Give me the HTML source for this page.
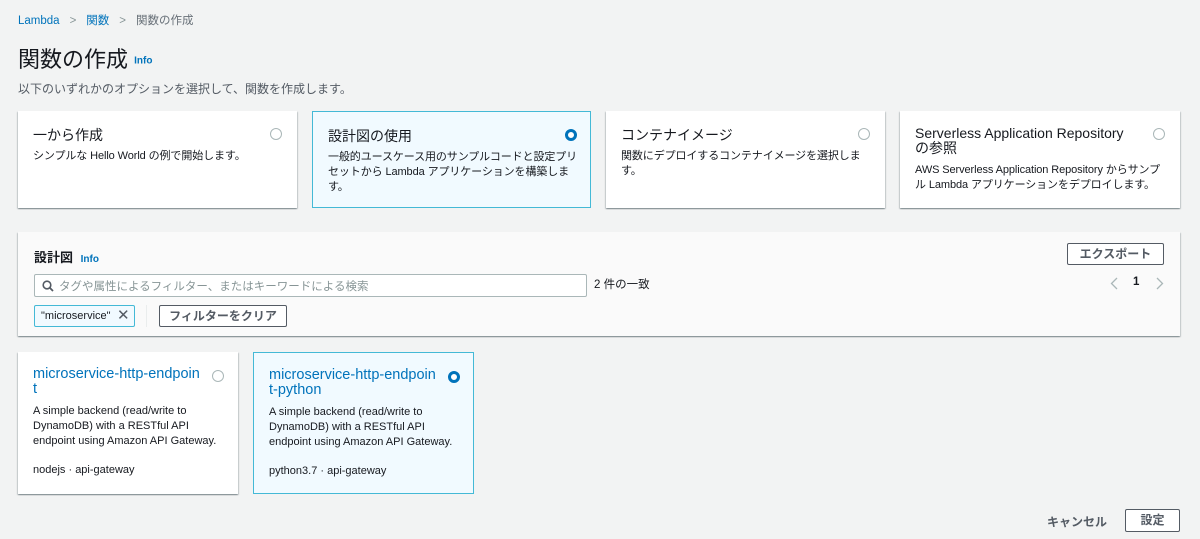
<!DOCTYPE html>
<html><head><meta charset="utf-8"><style>
*{box-sizing:border-box;margin:0;padding:0}
body{width:1200px;height:539px;background:#f2f3f3;font-family:"Liberation Sans","Noto Sans CJK JP",sans-serif;color:#16191f;position:relative;overflow:hidden;font-size:12px}
.a{position:absolute}
.blue{color:#0073bb}
.card{position:absolute;background:#fff;box-shadow:0 1px 1px rgba(0,28,36,.3),1px 1px 1px rgba(0,28,36,.15),-1px 1px 1px rgba(0,28,36,.15)}
.sel{background:#f1faff;border:1px solid #44b9d6;box-shadow:none}
.radio{position:absolute;width:12px;height:12px;border-radius:50%;border:1px solid #aab7b8;background:#fff}
.radio.on{border:3.5px solid #0073bb}
.ct{position:absolute;font-size:14px;left:15px;top:14px}
.cd{position:absolute;left:15px;top:38px;font-size:11px;line-height:15px;color:#16191f;white-space:nowrap;letter-spacing:-0.1px}
.btn{position:absolute;border:1px solid #545b64;background:#fff;font-weight:bold;font-size:12px;text-align:center;color:#545b64;border-radius:2px}
.bd{position:absolute;left:15px;top:52px;font-size:11px;line-height:15px;white-space:nowrap}
.bt{position:absolute;left:15px;top:15px;font-size:14.5px;line-height:15px;color:#0073bb;white-space:nowrap}
</style></head><body>
<div class="a" style="left:18px;top:12px;font-size:11.5px"><span class="blue">Lambda</span><span style="color:#879596;margin:0 10px">&gt;</span><span class="blue">関数</span><span style="color:#879596;margin:0 10px">&gt;</span><span style="color:#687078">関数の作成</span></div>
<div class="a" style="left:18px;top:42px;font-size:22px">関数の作成 <span class="blue" style="font-size:10px;font-weight:bold;vertical-align:middle">Info</span></div>
<div class="a" style="left:18px;top:80px;font-size:12px;color:#545b64">以下のいずれかのオプションを選択して、関数を作成します。</div>

<div class="card" style="left:18px;top:111px;width:279px;height:97px"><div class="ct">一から作成</div><div class="radio" style="left:252px;top:17px"></div><div class="cd">シンプルな Hello World の例で開始します。</div></div>
<div class="card sel" style="left:312px;top:111px;width:279px;height:97px"><div class="ct">設計図の使用</div><div class="radio on" style="left:252px;top:17px"></div><div class="cd">一般的ユースケース用のサンプルコードと設定プリ<br>セットから Lambda アプリケーションを構築しま<br>す。</div></div>
<div class="card" style="left:606px;top:111px;width:279px;height:97px"><div class="ct">コンテナイメージ</div><div class="radio" style="left:252px;top:17px"></div><div class="cd">関数にデプロイするコンテナイメージを選択しま<br>す。</div></div>
<div class="card" style="left:900px;top:111px;width:280px;height:97px"><div class="ct" style="line-height:15px;width:225px;top:15px">Serverless Application Repository の参照</div><div class="radio" style="left:253px;top:17px"></div><div class="cd" style="top:52px">AWS Serverless Application Repository からサンプ<br>ル Lambda アプリケーションをデプロイします。</div></div>

<div class="card" style="left:18px;top:232px;width:1162px;height:104px;background:#fafafa">
<div class="a" style="left:16px;top:15px;font-size:13px;font-weight:bold">設計図 <span class="blue" style="font-size:10px;margin-left:4px">Info</span></div>
<div class="a" style="left:16px;top:42px;width:553px;height:23px;background:#fff;border:1px solid #aab7b8;border-radius:2px;font-size:11.5px;color:#879596;padding:3px 0 0 24px">タグや属性によるフィルター、またはキーワードによる検索
<svg class="a" style="left:7px;top:5px" width="12" height="12" viewBox="0 0 12 12"><circle cx="5" cy="5" r="3.8" fill="none" stroke="#545b64" stroke-width="1.6"/><path d="M8 8l3 3" stroke="#545b64" stroke-width="1.8"/></svg></div>
<div class="a" style="left:576px;top:44px;font-size:11.5px">2 件の一致</div>
<svg class="a" style="left:1092px;top:45px" width="8" height="13" viewBox="0 0 8 13"><path d="M7 1L1.5 6.5 7 12" fill="none" stroke="#aab7b8" stroke-width="1.3"/></svg>
<div class="a" style="left:1115px;top:44px;font-size:11.5px;font-weight:bold">1</div>
<svg class="a" style="left:1138px;top:45px" width="8" height="13" viewBox="0 0 8 13"><path d="M1 1l5.5 5.5L1 12" fill="none" stroke="#aab7b8" stroke-width="1.3"/></svg>
<div class="btn" style="left:1049px;top:11px;width:97px;height:22px;line-height:20px">エクスポート</div>
<div class="a" style="left:16px;top:73px;width:101px;height:22px;background:#f1faff;border:1px solid #44b9d6;border-radius:2px;font-size:11px;padding:4px 0 0 6px">"microservice"<span style="font-size:15px;position:absolute;left:82px;top:0px;color:#545b64">✕</span></div>
<div class="a" style="left:128px;top:73px;width:1px;height:22px;background:#eaeded"></div>
<div class="btn" style="left:141px;top:73px;width:128px;height:22px;line-height:20px">フィルターをクリア</div>
</div>

<div class="card" style="left:18px;top:352px;width:220px;height:142px"><div class="bt">microservice-http-endpoin<br>t</div><div class="radio" style="left:194px;top:18px"></div><div class="bd">A simple backend (read/write to<br>DynamoDB) with a RESTful API<br>endpoint using Amazon API Gateway.</div><div class="a" style="left:15px;top:112px;font-size:11px">nodejs · api-gateway</div></div>
<div class="card sel" style="left:253px;top:352px;width:221px;height:142px"><div class="bt">microservice-http-endpoin<br>t-python</div><div class="radio on" style="left:194px;top:18px"></div><div class="bd">A simple backend (read/write to<br>DynamoDB) with a RESTful API<br>endpoint using Amazon API Gateway.</div><div class="a" style="left:15px;top:112px;font-size:11px">python3.7 · api-gateway</div></div>

<div class="a" style="left:1047px;top:513px;font-size:12px;font-weight:bold;color:#545b64">キャンセル</div>
<div class="btn" style="left:1125px;top:509px;width:55px;height:23px;line-height:21px">設定</div>
</body></html>
